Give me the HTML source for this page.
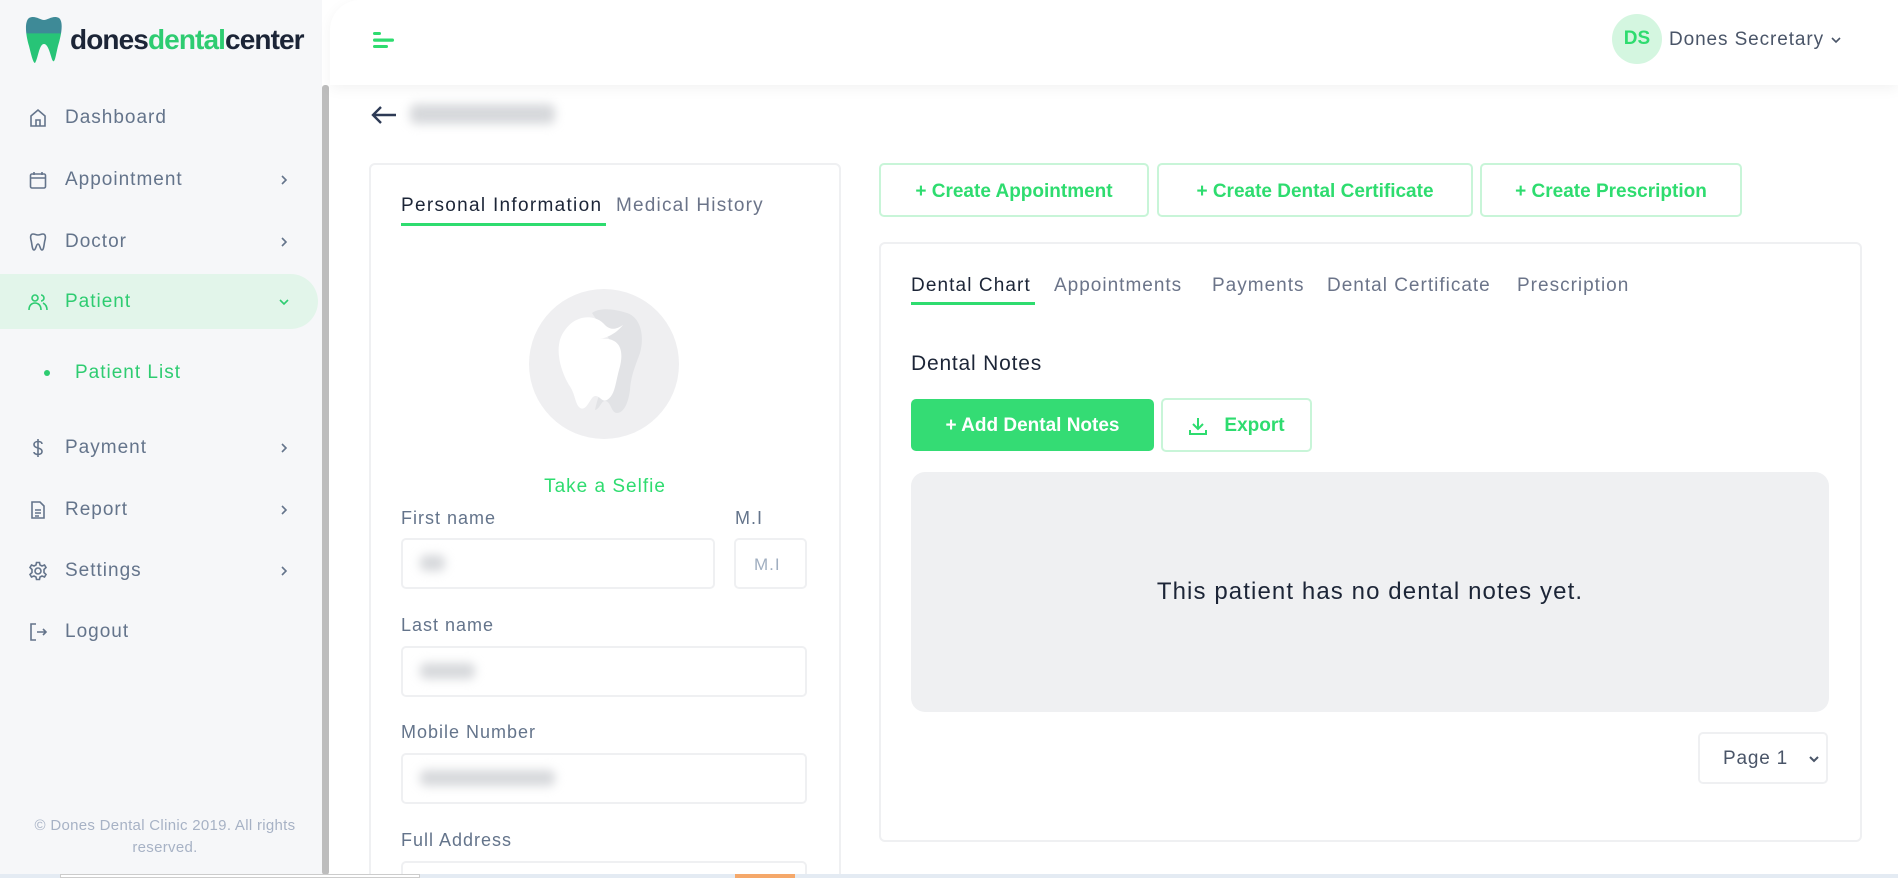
<!DOCTYPE html>
<html><head><meta charset="utf-8"><style>
*{box-sizing:border-box;margin:0;padding:0}
html,body{width:1898px;height:878px;overflow:hidden}
body{background:#fff;font-family:"Liberation Sans",sans-serif;position:relative;color:#1e293b}
#wrap{position:absolute;left:0;top:0;width:1898px;height:878px;overflow:hidden}
.a{position:absolute}
#side{left:0;top:0;width:322px;height:878px;background:#f6f7f9}
#sb{left:322px;top:85px;width:7px;height:790px;background:#bdbdbd;border-radius:3px}
.nav{position:absolute;left:0;width:318px;height:40px;display:flex;align-items:center;font-size:19px;color:#64748b;letter-spacing:1px}
.nav svg.i{position:absolute;left:28px;width:20px;height:20px}
.nav span{position:absolute;left:65px}
.nav .ch{position:absolute;left:278px;width:12px;height:12px}
#hdr{left:330px;top:0;width:1568px;height:85px;background:#fff;border-top-left-radius:30px;box-shadow:0 4px 14px rgba(0,0,0,.05)}
.card{border:2px solid #eff0f2;border-radius:6px;background:#fff}
.lbl{font-size:18px;color:#64748b;letter-spacing:1px}
.inp{border:2px solid #eff0f2;border-radius:5px;background:#fff}
.blur{background:#d6d8db;filter:blur(5px);border-radius:6px}
.ob{border:2px solid #c8f5d8;border-radius:5px;color:#2edc6f;font-size:19px;font-weight:bold;display:flex;align-items:center;justify-content:center;background:#fff}
.tab{font-size:19px;color:#6b7489;letter-spacing:1px}
</style></head><body><div id="wrap">
<div id="side" class="a"></div>
<svg class="a" style="left:25px;top:16px" width="38" height="48" viewBox="0 0 38 48"><defs><linearGradient id="g" x1="0" y1="0" x2="0" y2="1"><stop offset="0" stop-color="#3e8a97"/><stop offset=".35" stop-color="#3e8a97"/><stop offset=".36" stop-color="#27c477"/><stop offset="1" stop-color="#27c477"/></linearGradient></defs><path d="M4 2C10 -1 15 4 19 4C23 4 28 -1 34 2C39 6 36 20 33 30C31 38 30 47 28 45C26 43 24 28 19 28C14 28 13 43 10 47C8 47 6 38 4 30C1 20 -1 6 4 2Z" fill="url(#g)"/></svg>
<div class="a" style="left:70px;top:24px;font-size:28px;font-weight:bold;letter-spacing:-0.9px;color:#1c2537">dones<span style="color:#2ecc71">dental</span>center</div>

<div class="nav" style="top:98px"><svg class="i" viewBox="0 0 20 20" fill="none" stroke="#64748b" stroke-width="1.6"><path d="M3 8L10 2L17 8V18H3Z"/><path d="M8 18V12H12V18"/></svg><span>Dashboard</span></div>
<div class="nav" style="top:160px"><svg class="i" viewBox="0 0 20 20" fill="none" stroke="#64748b" stroke-width="1.6"><rect x="2.5" y="4" width="15" height="14" rx="1.5"/><path d="M2.5 8H17.5M6 2V5M14 2V5"/></svg><span>Appointment</span><svg class="ch" viewBox="0 0 12 12" fill="none" stroke="#64748b" stroke-width="1.6"><path d="M4 2L8 6L4 10"/></svg></div>
<div class="nav" style="top:222px"><svg class="i" viewBox="0 0 20 20" fill="none" stroke="#64748b" stroke-width="1.6"><path d="M5 2C3 2 2 4 3 8C4 11 4 18 6 18C8 18 8 12 10 12C12 12 12 18 14 18C16 18 16 11 17 8C18 4 17 2 15 2C13 2 12 3 10 3C8 3 7 2 5 2Z"/></svg><span>Doctor</span><svg class="ch" viewBox="0 0 12 12" fill="none" stroke="#64748b" stroke-width="1.6"><path d="M4 2L8 6L4 10"/></svg></div>
<div class="a" style="left:0;top:274px;width:318px;height:55px;background:#e2f5ea;border-radius:0 28px 28px 0"></div>
<div class="nav" style="top:282px;color:#2ecc71"><svg class="i" viewBox="0 0 20 20" fill="none" stroke="#2ecc71" stroke-width="1.6"><circle cx="7" cy="6" r="3"/><path d="M1 18C1 13 4 11 7 11C10 11 13 13 13 18"/><path d="M13 3A3 3 0 0 1 13 9M15 11C17 12 19 14 19 18"/></svg><span>Patient</span><svg class="ch" viewBox="0 0 12 12" fill="none" stroke="#2ecc71" stroke-width="1.6"><path d="M2 4L6 8L10 4"/></svg></div>
<div class="a" style="left:44px;top:370px;width:6px;height:6px;border-radius:50%;background:#2ecc71"></div>
<div class="a" style="left:75px;top:362px;font-size:19px;color:#2ecc71;letter-spacing:1px">Patient List</div>
<div class="nav" style="top:428px"><svg class="i" viewBox="0 0 20 20" fill="none" stroke="#64748b" stroke-width="1.6"><path d="M14 6C14 4 12 3.5 10 3.5C8 3.5 6 4.5 6 6.5C6 11 14 9 14 13.5C14 15.5 12 16.5 10 16.5C8 16.5 6 15.5 6 14M10 1V19"/></svg><span>Payment</span><svg class="ch" viewBox="0 0 12 12" fill="none" stroke="#64748b" stroke-width="1.6"><path d="M4 2L8 6L4 10"/></svg></div>
<div class="nav" style="top:490px"><svg class="i" viewBox="0 0 20 20" fill="none" stroke="#64748b" stroke-width="1.6"><path d="M4 2H12L16 6V18H4Z"/><path d="M7 10H13M7 13H13M7 16H11"/></svg><span>Report</span><svg class="ch" viewBox="0 0 12 12" fill="none" stroke="#64748b" stroke-width="1.6"><path d="M4 2L8 6L4 10"/></svg></div>
<div class="nav" style="top:551px"><svg class="i" viewBox="0 0 20 20" fill="none" stroke="#64748b" stroke-width="1.6"><circle cx="10" cy="10" r="3"/><path d="M8.5 1.5H11.5L12 4L14 5L16.5 4L18 6.5L16 8.5V11.5L18 13.5L16.5 16L14 15L12 16L11.5 18.5H8.5L8 16L6 15L3.5 16L2 13.5L4 11.5V8.5L2 6.5L3.5 4L6 5L8 4Z"/></svg><span>Settings</span><svg class="ch" viewBox="0 0 12 12" fill="none" stroke="#64748b" stroke-width="1.6"><path d="M4 2L8 6L4 10"/></svg></div>
<div class="nav" style="top:612px"><svg class="i" viewBox="0 0 20 20" fill="none" stroke="#64748b" stroke-width="1.6"><path d="M8 2H3V18H8M9 10H18M15 7L18 10L15 13"/></svg><span>Logout</span></div>
<div class="a" style="left:18px;top:815px;width:294px;text-align:center;font-size:15px;line-height:22px;color:#a7b2c5;letter-spacing:0.3px">© Dones Dental Clinic 2019. All rights reserved.</div>
<div id="sb" class="a"></div>

<div id="hdr" class="a"></div>
<svg class="a" style="left:373px;top:31px" width="24" height="18"><rect x="0" y="1" width="8" height="3" rx="1.5" fill="#2edc6f"/><rect x="0" y="7.5" width="21" height="3.2" rx="1.6" fill="#2edc6f"/><rect x="0" y="14" width="15" height="3" rx="1.5" fill="#2edc6f"/></svg>
<div class="a" style="left:1612px;top:14px;width:50px;height:50px;border-radius:50%;background:#d4f6e0;color:#2edc6f;font-weight:bold;font-size:19px;display:flex;align-items:center;justify-content:center">DS</div>
<div class="a" style="left:1669px;top:29px;font-size:19px;color:#4a5568;letter-spacing:0.9px">Dones Secretary</div>
<svg class="a" style="left:1830px;top:35px" width="12" height="10" fill="none" stroke="#4a5568" stroke-width="1.6"><path d="M2 3L6 7L10 3"/></svg>

<svg class="a" style="left:370px;top:104px" width="28" height="22" fill="none" stroke="#2d3a55" stroke-width="2.4"><path d="M26 11H3M11 3L3 11L11 19"/></svg>
<div class="a blur" style="left:410px;top:104px;width:145px;height:20px"></div>

<div class="a card" style="left:369px;top:163px;width:472px;height:740px"></div>
<div class="a" style="left:401px;top:195px;font-size:19px;color:#1c2537;letter-spacing:1.3px">Personal Information</div>
<div class="a" style="left:401px;top:223px;width:205px;height:3px;background:#2edc6f"></div>
<div class="a tab" style="left:616px;top:195px;letter-spacing:1.2px">Medical History</div>
<div class="a" style="left:529px;top:289px;width:150px;height:150px;border-radius:50%;background:#efeff1"></div>
<svg class="a" style="left:545px;top:305px" width="118" height="118" viewBox="0 0 118 118"><path d="M47 8C55 2 70 4 82 8C95 12 100 30 95 48C90 62 86 70 85 85C83 100 78 108 72 108C66 108 66 96 60 96C56 96 55 104 50 105C55 80 70 60 68 40Z" fill="#e2e3e6"/><path d="M20 25C30 10 50 8 60 20C66 26 72 24 78 20C70 30 60 33 55 34C75 32 80 45 74 65C70 80 70 90 62 95C56 98 54 88 48 92C44 96 40 108 34 102C30 98 30 88 24 80C15 65 8 40 20 25Z" fill="#fff"/></svg>
<div class="a" style="left:369px;top:476px;width:472px;text-align:center;font-size:19px;color:#2edc6f;letter-spacing:1px">Take a Selfie</div>
<div class="a lbl" style="left:401px;top:508px">First name</div>
<div class="a lbl" style="left:735px;top:508px">M.I</div>
<div class="a inp" style="left:401px;top:538px;width:314px;height:51px"></div>
<div class="a blur" style="left:420px;top:555px;width:25px;height:16px"></div>
<div class="a inp" style="left:734px;top:538px;width:73px;height:51px"></div>
<div class="a" style="left:754px;top:555px;font-size:17px;color:#a0aec0;letter-spacing:1px">M.I</div>
<div class="a lbl" style="left:401px;top:615px">Last name</div>
<div class="a inp" style="left:401px;top:646px;width:406px;height:51px"></div>
<div class="a blur" style="left:420px;top:663px;width:55px;height:16px"></div>
<div class="a lbl" style="left:401px;top:722px">Mobile Number</div>
<div class="a inp" style="left:401px;top:753px;width:406px;height:51px"></div>
<div class="a blur" style="left:420px;top:770px;width:135px;height:16px"></div>
<div class="a lbl" style="left:401px;top:830px">Full Address</div>
<div class="a inp" style="left:401px;top:861px;width:406px;height:51px"></div>

<div class="a ob" style="left:879px;top:163px;width:270px;height:54px;padding-top:3px">+ Create Appointment</div>
<div class="a ob" style="left:1157px;top:163px;width:316px;height:54px;padding-top:3px">+ Create Dental Certificate</div>
<div class="a ob" style="left:1480px;top:163px;width:262px;height:54px;padding-top:3px">+ Create Prescription</div>

<div class="a card" style="left:879px;top:242px;width:983px;height:600px"></div>
<div class="a" style="left:911px;top:275px;font-size:19px;color:#1c2537;letter-spacing:1.1px">Dental Chart</div>
<div class="a" style="left:911px;top:302px;width:124px;height:3px;background:#2edc6f"></div>
<div class="a tab" style="left:1054px;top:275px">Appointments</div>
<div class="a tab" style="left:1212px;top:275px">Payments</div>
<div class="a tab" style="left:1327px;top:275px">Dental Certificate</div>
<div class="a tab" style="left:1517px;top:275px">Prescription</div>
<div class="a" style="left:911px;top:352px;font-size:21px;color:#1c2537;letter-spacing:0.8px">Dental Notes</div>
<div class="a" style="left:911px;top:399px;width:243px;height:52px;background:#34dc74;border-radius:5px;color:#fff;font-size:19px;font-weight:bold;display:flex;align-items:center;justify-content:center;padding-top:2px">+ Add Dental Notes</div>
<div class="a ob" style="left:1161px;top:398px;width:151px;height:54px;padding-top:2px"><svg width="20" height="20" fill="none" stroke="#2edc6f" stroke-width="2" style="margin-right:16px"><path d="M10 2V13M5 8L10 13L15 8M2 14V18H18V14"/></svg>Export</div>
<div class="a" style="left:911px;top:472px;width:918px;height:240px;background:#eff0f2;border-radius:14px;display:flex;align-items:center;justify-content:center;font-size:24px;color:#1c2537;letter-spacing:1.1px">This patient has no dental notes yet.</div>
<div class="a inp" style="left:1698px;top:732px;width:130px;height:52px"></div>
<div class="a" style="left:1723px;top:748px;font-size:19px;color:#4a5568;letter-spacing:0.8px">Page 1</div>
<svg class="a" style="left:1808px;top:754px" width="12" height="10" fill="none" stroke="#4a5568" stroke-width="2"><path d="M2 3L6 7L10 3"/></svg>

<div class="a" style="left:0;top:874px;width:1898px;height:4px;background:#e4ebf3"></div>
<div class="a" style="left:60px;top:874px;width:360px;height:4px;background:#fff;border:1px solid #ccc"></div>
<div class="a" style="left:735px;top:874px;width:60px;height:4px;background:#f5a86a"></div>
</div></body></html>
